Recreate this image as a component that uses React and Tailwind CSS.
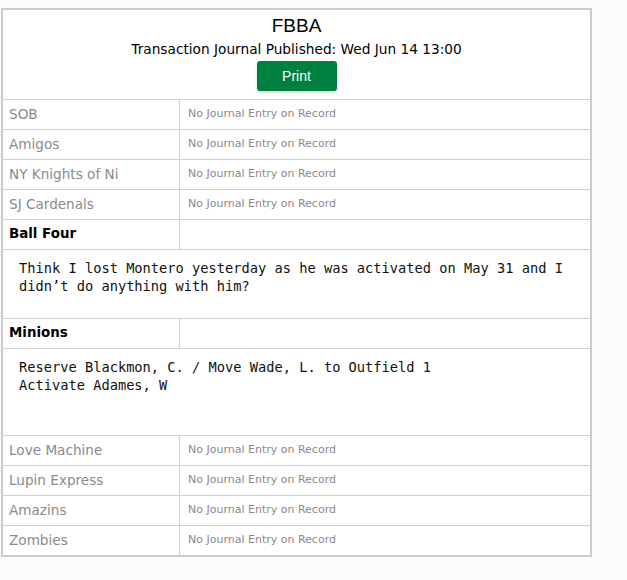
import React from 'react';

const verdana = { fontFamily: '"DejaVu Sans", Verdana, sans-serif' };

const teams = [
  { name: 'SOB' },
  { name: 'Amigos' },
  { name: 'NY Knights of Ni' },
  { name: 'SJ Cardenals' },
  { name: 'Ball Four', entry: "Think I lost Montero yesterday as he was activated on May 31 and I\ndidn’t do anything with him?", h: 'h-[69px]' },
  { name: 'Minions', entry: 'Reserve Blackmon, C. / Move Wade, L. to Outfield 1\nActivate Adames, W', h: 'h-[87px]' },
  { name: 'Love Machine' },
  { name: 'Lupin Express' },
  { name: 'Amazins' },
  { name: 'Zombies' },
];

const TeamRow = ({ team }) => {
  if (team.entry) {
    return (
      <>
        <div className="flex h-[30px] border-t border-[#d0d0d0]">
          <div className="w-[177px] shrink-0 border-r border-[#d0d0d0] pl-[6px] flex items-center text-[13.4px] font-bold text-black font-['DejaVu_Sans']">{team.name}</div>
          <div className="flex-1" />
        </div>
        <div className={`border-t border-[#d0d0d0] pl-[16px] pt-[9px] ${team.h}`}>
          <pre className="text-[13.7px] leading-[18px] text-[#111] font-['DejaVu_Sans_Mono',monospace] whitespace-pre">{team.entry}</pre>
        </div>
      </>
    );
  }
  return (
    <div className="flex h-[30px] border-t border-[#d0d0d0]">
      <div className="w-[177px] shrink-0 border-r border-[#d0d0d0] pl-[6px] flex items-center text-[13.6px] text-[#8a8a8a] font-['DejaVu_Sans']">{team.name}</div>
      <div className="flex-1 pl-[8px] flex items-center text-[11px] text-[#8a8a8a] font-['DejaVu_Sans']">No Journal Entry on Record</div>
    </div>
  );
};

export default function App() {
  return (
    <div className="min-h-[580px] bg-[#fcfcfc] pt-[8px] pl-[1px]">
      <div className="w-[591px] border-2 border-[#cccccc] bg-white">
        <div className="flex flex-col items-center pt-[4px] pb-[8px]">
          <h1 className="text-[19px] leading-[24px] text-black font-['Liberation_Sans']">FBBA</h1>
          <p className="text-[13.7px] leading-[16px] mt-[3px] text-black" style={verdana}>Transaction Journal Published: Wed Jun 14 13:00</p>
          <button className="mt-[4px] w-[80px] h-[30px] rounded-[3px] bg-[#00803e] text-white text-[14px] font-['Liberation_Sans'] shadow-[0_2px_3px_rgba(0,0,0,0.15)]">Print</button>
        </div>
        {teams.map((t) => <TeamRow key={t.name} team={t} />)}
      </div>
    </div>
  );
}
